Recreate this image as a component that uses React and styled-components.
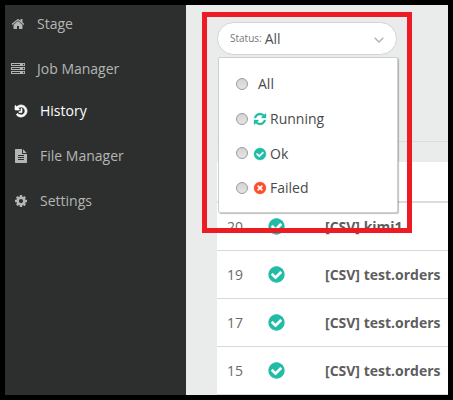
import React from 'react';
import styled, { createGlobalStyle } from 'styled-components';

const GlobalStyle = createGlobalStyle`
  * {
    box-sizing: border-box;
  }
  body {
    margin: 0;
    background: #000;
    font-family: 'Open Sans', sans-serif;
    font-size: 14px;
    line-height: 19px;
  }
`;

const icons = {
  home: 'M1472 992v480q0 26-19 45t-45 19h-384v-384h-256v384h-384q-26 0-45-19t-19-45v-480q0-1 .5-3t.5-3l575-474 575 474q1 2 1 6zm223-69l-62 74q-8 9-21 11h-3q-13 0-21-7l-692-577-692 577q-12 8-24 7-13-2-21-11l-62-74q-8-10-7-23.5t11-21.5l719-599q32-26 76-26t76 26l244 204v-195q0-14 9-23t23-9h192q14 0 23 9t9 23v408l219 182q10 8 11 21.5t-7 23.5z',
  server: 'M128 1408h1024v-128h-1024v128zm0-512h1024v-128h-1024v128zm1568 448q0-40-28-68t-68-28-68 28-28 68 28 68 68 28 68-28 28-68zm-1568-960h1024v-128h-1024v128zm1568 448q0-40-28-68t-68-28-68 28-28 68 28 68 68 28 68-28 28-68zm0-512q0-40-28-68t-68-28-68 28-28 68 28 68 68 28 68-28 28-68zm96 832v384h-1792v-384h1792zm0-512v384h-1792v-384h1792zm0-512v384h-1792v-384h1792z',
  history: 'M1664 896q0 156-61 298t-164 245-245 164-298 61q-172 0-327-72.5t-264-204.5q-7-10-6.5-22.5t8.5-20.5l137-138q10-9 25-9 16 2 23 12 73 95 179 147t225 52q104 0 198.5-40.5t163.5-109.5 109.5-163.5 40.5-198.5-40.5-198.5-109.5-163.5-163.5-109.5-198.5-40.5q-98 0-188 35.5t-160 101.5l137 138q31 30 14 69-17 40-59 40h-448q-26 0-45-19t-19-45v-448q0-42 40-59 39-17 69 14l130 129q107-101 244.5-156.5t284.5-55.5q156 0 298 61t245 164 164 245 61 298zm-640-288v448q0 14-9 23t-23 9h-320q-14 0-23-9t-9-23v-64q0-14 9-23t23-9h224v-352q0-14 9-23t23-9h64q14 0 23 9t9 23z',
  file: 'M1596 476q14 14 28 36h-472v-472q22 14 36 28zm-476 164h544v1056q0 40-28 68t-68 28h-1344q-40 0-68-28t-28-68v-1600q0-40 28-68t68-28h800v544q0 40 28 68t68 28zm160 736v-64q0-14-9-23t-23-9h-704q-14 0-23 9t-9 23v64q0 14 9 23t23 9h704q14 0 23-9t9-23zm0-256v-64q0-14-9-23t-23-9h-704q-14 0-23 9t-9 23v64q0 14 9 23t23 9h704q14 0 23-9t9-23zm0-256v-64q0-14-9-23t-23-9h-704q-14 0-23 9t-9 23v64q0 14 9 23t23 9h704q14 0 23-9t9-23z',
  cog: 'M1152 896q0-106-75-181t-181-75-181 75-75 181 75 181 181 75 181-75 75-181zm512-109v222q0 12-8 23t-20 13l-185 28q-19 54-39 91 35 50 107 138 10 12 10 25t-9 23q-27 37-99 108t-94 71q-12 0-26-9l-138-108q-44 23-91 38-16 136-29 186-7 28-36 28h-222q-14 0-24.5-8.5t-11.5-21.5l-28-184q-49-16-90-37l-141 107q-10 9-25 9-14 0-25-11-126-114-165-168-7-10-7-23 0-12 8-23 15-21 51-66.5t54-70.5q-27-50-41-99l-183-27q-13-2-21-12.5t-8-23.5v-222q0-12 8-23t19-13l186-28q14-46 39-92-40-57-107-138-10-12-10-24 0-10 9-23 26-36 98.5-107.5t94.5-71.5q13 0 26 10l138 107q44-23 91-38 16-136 29-186 7-28 36-28h222q14 0 24.5 8.5t11.5 21.5l28 184q49 16 90 37l142-107q9-9 24-9 13 0 25 10 129 119 165 170 7 8 7 22 0 12-8 23-15 21-51 66.5t-54 70.5q26 50 41 98l183 28q13 2 21 12.5t8 23.5z',
  refresh: 'M1639 1056q0 5-1 7-64 268-268 434.5t-478 166.5q-146 0-282.5-55t-243.5-157l-129 129q-19 19-45 19t-45-19-19-45v-448q0-26 19-45t45-19h448q26 0 45 19t19 45-19 45l-137 137q71 66 161 102t187 36q134 0 250-65t186-179q11-17 53-117 8-23 30-23h192q13 0 22.5 9.5t9.5 22.5zm25-800v448q0 26-19 45t-45 19h-448q-26 0-45-19t-19-45 19-45l138-138q-148-137-349-137-134 0-250 65t-186 179q-11 17-53 117-8 23-30 23h-199q-13 0-22.5-9.5t-9.5-22.5v-7q65-268 270-434.5t480-166.5q146 0 284 55.5t245 156.5l130-129q19-19 45-19t45 19 19 45z',
  check: 'M1412 734q0-28-18-46l-91-90q-19-19-45-19t-45 19l-408 407-226-226q-19-19-45-19t-45 19l-91 90q-18 18-18 46 0 27 18 45l362 362q19 19 45 19 27 0 46-19l543-543q18-18 18-45zm252 162q0 209-103 385.5t-279.5 279.5-385.5 103-385.5-103-279.5-279.5-103-385.5 103-385.5 279.5-279.5 385.5-103 385.5 103 279.5 279.5 103 385.5z',
  times: 'M1277 1122q0-26-19-45l-181-181 181-181q19-19 19-45 0-27-19-46l-90-90q-19-18-46-18-26 0-45 19l-181 181-181-181q-19-19-45-19-27 0-46 18l-90 90q-19 19-19 46 0 26 19 45l181 181-181 181q-19 19-19 45 0 27 19 46l90 90q19 18 46 18 26 0 45-19l181-181 181 181q19 19 45 19 27 0 46-18l90-90q19-19 19-46zm387-226q0 209-103 385.5t-279.5 279.5-385.5 103-385.5-103-279.5-279.5-103-385.5 103-385.5 279.5-279.5 385.5-103 385.5 103 279.5 279.5 103 385.5z',
};

const Svg = styled.svg`
  flex: none;
  width: ${({ $size }) => $size}px;
  height: ${({ $size }) => $size}px;
  fill: ${({ $color }) => $color || 'currentColor'};
  stroke: ${({ $color }) => $color || 'currentColor'};
  stroke-width: ${({ $weight }) => $weight};
`;

const Icon = ({ name, size = 14, color, weight = 0 }) => (
  <Svg viewBox="0 0 1792 1792" $size={size} $color={color} $weight={weight}>
    <path d={icons[name]} />
  </Svg>
);

const Frame = styled.div`
  position: relative;
  display: flex;
  width: 453px;
  height: 400px;
  border: 5px solid #000;
  overflow: hidden;
`;

const Sidebar = styled.nav`
  flex: none;
  width: 181px;
  background: #2d2f2e;
`;

const NavItem = styled.div`
  display: flex;
  align-items: center;
  gap: 12px;
  height: ${({ $height }) => $height}px;
  padding-left: ${({ $indent }) => $indent}px;
  color: ${({ $active }) => ($active ? '#fff' : '#b4b6b4')};
`;

const NavText = styled.span`
  padding-bottom: 1px;
`;

const Content = styled.main`
  flex: 1;
  min-width: 0;
  padding-left: 31px;
  background: #eaeceb;
`;

const Filters = styled.div`
  position: relative;
  height: 137px;
  padding-top: 17px;
  border-bottom: 1px solid #dcdedd;
`;

const Select = styled.div`
  display: flex;
  align-items: center;
  gap: 3px;
  width: 180px;
  height: 33px;
  padding: 0 12px 1px;
  border: 1px solid #d2d4d3;
  border-radius: 17px;
  background: #fff;
  color: #505050;
`;

const Label = styled.span`
  font-size: 10px;
  color: #777;
`;

const Chevron = styled.svg`
  width: 10px;
  height: 6px;
  margin: 4px 0 0 auto;
  fill: none;
  stroke: #b0b0b0;
  stroke-width: 1.3;
`;

const Menu = styled.div`
  position: absolute;
  top: 52px;
  left: 1px;
  width: 180px;
  height: 156px;
  padding: 9px 17px;
  border: 1px solid #cfcfcf;
  border-radius: 2px;
  background: #fff;
  box-shadow: 1px 1px 1px rgba(0, 0, 0, 0.25);
  color: #4a4a4a;
`;

const Option = styled.div`
  display: flex;
  align-items: center;
  height: 34.7px;
`;

const Radio = styled.span`
  width: 12px;
  height: 12px;
  margin: 0 ${({ $space }) => $space}px 1px 0;
  border: 1px solid #9c9c9c;
  border-radius: 50%;
  background: linear-gradient(#d4d4d4, #e4e4e4);
`;

const OptionText = styled.span`
  margin-left: 3px;
  padding-bottom: 1px;
`;

const Table = styled.div`
  margin-top: 20px;
  background: #fff;
`;

const TableHead = styled.div`
  height: 41px;
  border-bottom: 2px solid #dcdcdc;
`;

const Row = styled.div`
  display: grid;
  grid-template-columns: 40px 58px 1fr;
  align-items: center;
  height: 48px;
  padding-left: 10px;
  border-bottom: 1px solid #d8d8d8;
  color: #6a6a6a;
  white-space: nowrap;
`;

const JobName = styled.b`
  color: #5e5e5e;
`;

const Highlight = styled.div`
  position: absolute;
  top: 7px;
  left: 197px;
  width: 210px;
  height: 221px;
  border: 5px solid #ed1c24;
`;

const nav = [
  { text: 'Stage', icon: 'home', height: 38, indent: 6 },
  { text: 'Job Manager', icon: 'server', height: 52, indent: 6 },
  { text: 'History', icon: 'history', height: 32, indent: 9, active: true },
  { text: 'File Manager', icon: 'file', height: 58, indent: 9 },
  { text: 'Settings', icon: 'cog', height: 32, indent: 9 },
];

const options = [
  { text: 'All' },
  { text: 'Running', icon: 'refresh', color: '#20bca6' },
  { text: 'Ok', icon: 'check', color: '#20bca6' },
  { text: 'Failed', icon: 'times', color: '#fb4f2c' },
];

const jobs = [
  { id: 20, name: '[CSV] kimi1' },
  { id: 19, name: '[CSV] test.orders' },
  { id: 17, name: '[CSV] test.orders' },
  { id: 15, name: '[CSV] test.orders' },
];

export default function App() {
  return (
    <>
      <GlobalStyle />
      <Frame>
        <Sidebar>
          {nav.map(({ text, icon, height, indent, active }) => (
            <NavItem key={text} $height={height} $indent={indent} $active={active}>
              <Icon name={icon} weight={active ? 90 : 0} />
              <NavText>{text}</NavText>
            </NavItem>
          ))}
        </Sidebar>
        <Content>
          <Filters>
            <Select>
              <Label>Status:</Label>
              All
              <Chevron viewBox="0 0 10 6">
                <path d="M0.7 0.7L5 5L9.3 0.7" />
              </Chevron>
            </Select>
            <Menu>
              {options.map(({ text, icon, color }) => (
                <Option key={text}>
                  <Radio $space={icon ? 5 : 7} />
                  {icon && <Icon name={icon} color={color} weight={40} />}
                  <OptionText>{text}</OptionText>
                </Option>
              ))}
            </Menu>
          </Filters>
          <Table>
            <TableHead />
            {jobs.map(({ id, name }) => (
              <Row key={id}>
                <span>{id}</span>
                <Icon name="check" size={19} color="#20bca6" />
                <JobName>{name}</JobName>
              </Row>
            ))}
          </Table>
        </Content>
        <Highlight />
      </Frame>
    </>
  );
}
